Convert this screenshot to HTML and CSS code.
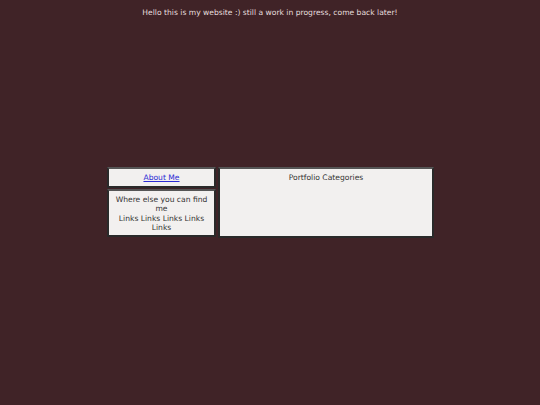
FILE: index.html
```html
<!DOCTYPE html>
<html>
<head>
<meta charset="utf-8">
<link rel="stylesheet" href="styles.css">
</head>
<body>
<p class="banner">Hello this is my website :) still a work in progress, come back later!</p>
<main class="layout">
  <div class="side">
    <div class="box about"><a href="#">About Me</a></div>
    <div class="box links">Where else you can find me<br>Links Links Links Links Links</div>
  </div>
  <div class="box portfolio">Portfolio Categories</div>
</main>
</body>
</html>
```
FILE: styles.css
```css
html, body {
  margin: 0;
  height: 100%;
}
body {
  background: #402327;
  font-family: "DejaVu Sans", Verdana, sans-serif;
  font-size: 7.6px;
  color: #333;
  position: relative;
}
.banner {
  margin: 0;
  padding-top: 8px;
  text-align: center;
  color: #e6dede;
}
.layout {
  position: absolute;
  left: 107px;
  top: 167px;
  width: 327px;
  display: flex;
  gap: 2px;
}
.side {
  width: 109px;
  display: flex;
  flex-direction: column;
  gap: 1px;
}
.box {
  background: #f2f0ef;
  border: 2px solid #2a2a2a;
  border-top-color: #555;
  text-align: center;
  box-sizing: border-box;
}
.about {
  height: 21px;
  padding-top: 4px;
}
.about a {
  color: #2b2bd4;
}
.links {
  height: 48px;
  padding: 4px 3px 0;
  line-height: 9.4px;
}
.portfolio {
  flex: 1;
  height: 71px;
  padding-top: 4px;
}
```
